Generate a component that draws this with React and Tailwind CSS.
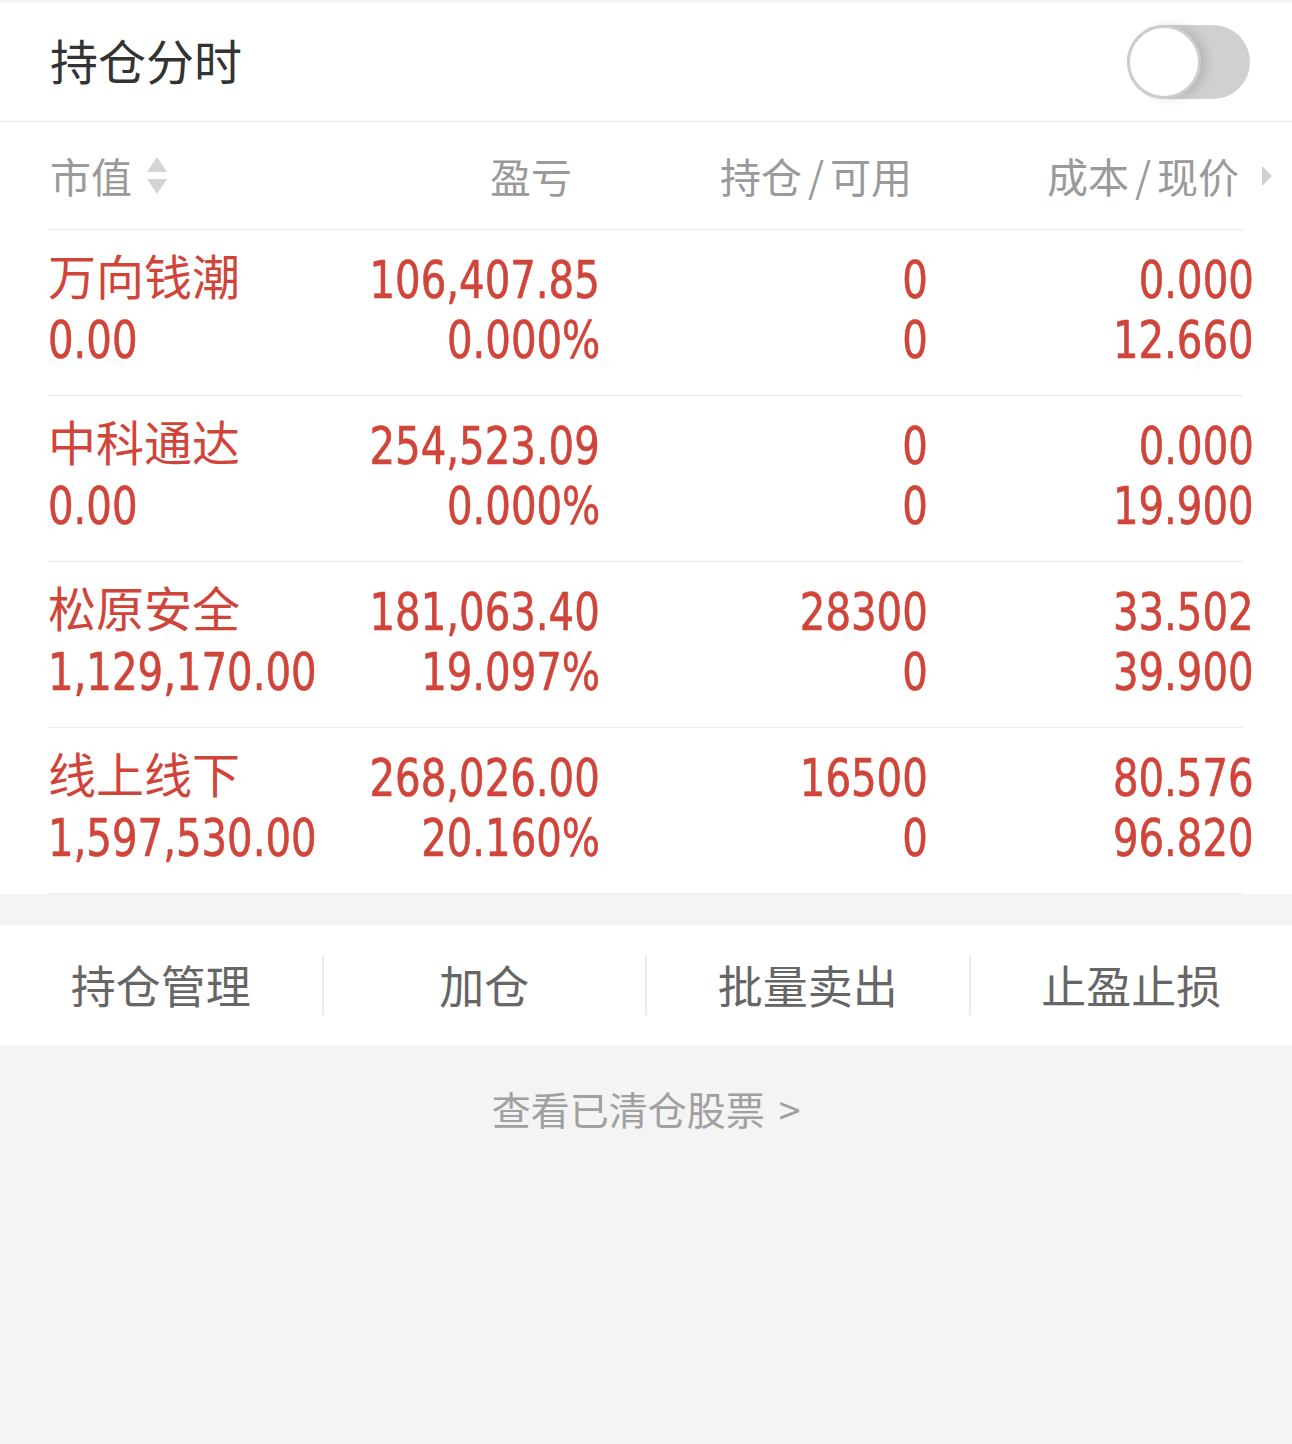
import React from "react";

// dati delle posizioni
const rows = [
  { name: "万向钱潮", value: "0.00", pl: "106,407.85", plPct: "0.000%", hold: "0", avail: "0", cost: "0.000", price: "12.660" },
  { name: "中科通达", value: "0.00", pl: "254,523.09", plPct: "0.000%", hold: "0", avail: "0", cost: "0.000", price: "19.900" },
  { name: "松原安全", value: "1,129,170.00", pl: "181,063.40", plPct: "19.097%", hold: "28300", avail: "0", cost: "33.502", price: "39.900" },
  { name: "线上线下", value: "1,597,530.00", pl: "268,026.00", plPct: "20.160%", hold: "16500", avail: "0", cost: "80.576", price: "96.820" },
];

const cjk = "font-['Noto_Sans_CJK_SC',sans-serif]";
const num = "font-['DejaVu_Sans_Condensed','Liberation_Sans_Narrow',Roboto,sans-serif]";

// numero stretto, stile DIN
function Num({ children, right }) {
  return (
    <div className="h-[60px] leading-[60px]">
      <span
        className={`inline-block ${num} text-[52px] leading-[60px] scale-x-[0.86] [-webkit-text-stroke:0.6px_#d0453a] ${
          right ? "origin-right" : "origin-left"
        }`}
      >
        {children}
      </span>
    </div>
  );
}

function SortIcon() {
  return (
    <svg width="22" height="40" viewBox="0 0 22 40" className="ml-[14px]">
      <path d="M11 1 L21 16 L1 16 Z" fill="#d4d4d4" />
      <path d="M1 23 L21 23 L11 38 Z" fill="#d4d4d4" />
    </svg>
  );
}

function Toggle() {
  return (
    <div className="relative w-[123px] h-[74px] rounded-full bg-[#d0d0d0]">
      <div className="absolute left-0 top-0 w-[74px] h-[74px] rounded-full bg-white border-[3px] border-[#cdcdcd] shadow-[6px_0_10px_rgba(0,0,0,0.12)]" />
    </div>
  );
}

export default function App() {
  return (
    <div className={`w-[1292px] min-h-[1444px] bg-[#f4f4f4] pt-[3px] ${cjk}`}>
      {/* intestazione */}
      <div className="bg-white">
        <div className="h-[119px] pl-[50px] pr-[42px] flex items-center justify-between border-b border-[#ececec]">
          <span className="text-[48px] text-[#333] leading-none -mt-[6px]">持仓分时</span>
          <Toggle />
        </div>

        {/* colonne */}
        <div className="ml-12 mr-[49px] h-[108px] flex items-center border-b border-[#ececec] text-[41px] text-[#9a9a9a]">
          <div className="w-[272px] shrink-0 flex items-center pl-[2px]">
            <span>市值</span>
            <SortIcon />
          </div>
          <div className="w-[280px] shrink-0 text-right pr-[28px]">盈亏</div>
          <div className="w-[328px] shrink-0 text-right pr-[16px]">
            持仓<span className="mx-[6px]">/</span>可用
          </div>
          <div className="w-[345px] shrink-0 flex items-center justify-end">
            <span>
              成本<span className="mx-[6px]">/</span>现价
            </span>
            <svg width="12" height="22" viewBox="0 0 12 22" className="ml-[22px]">
              <path d="M1 1 L11 11 L1 21 Z" fill="#cfcfcf" />
            </svg>
          </div>
        </div>

        {/* righe */}
        {rows.map((r) => (
          <div key={r.name} className="ml-12 mr-[49px] h-[166px] pt-[20px] flex border-b border-[#ececec] text-[#d0453a]">
            <div className="w-[272px] shrink-0">
              <div className="text-[48px] h-[60px] leading-[48px]">{r.name}</div>
              <Num>{r.value}</Num>
            </div>
            <div className="w-[280px] shrink-0 text-right">
              <Num right>{r.pl}</Num>
              <Num right>{r.plPct}</Num>
            </div>
            <div className="w-[328px] shrink-0 text-right">
              <Num right>{r.hold}</Num>
              <Num right>{r.avail}</Num>
            </div>
            <div className="w-[326px] shrink-0 text-right">
              <Num right>{r.cost}</Num>
              <Num right>{r.price}</Num>
            </div>
          </div>
        ))}
      </div>

      {/* azioni */}
      <div className="mt-[31px] bg-white h-[120px] flex items-center text-[45px] text-[#666]">
        <div className="flex-1 text-center">持仓管理</div>
        <div className="w-[2px] h-[60px] bg-[#ebebeb]" />
        <div className="flex-1 text-center">加仓</div>
        <div className="w-[2px] h-[60px] bg-[#ebebeb]" />
        <div className="flex-1 text-center">批量卖出</div>
        <div className="w-[2px] h-[60px] bg-[#ebebeb]" />
        <div className="flex-1 text-center">止盈止损</div>
      </div>

      <div className="pt-[38px] text-center text-[39px] leading-[50px] text-[#a0a0a0]">
        查看已清仓股票<span className="ml-[14px]">&gt;</span>
      </div>
    </div>
  );
}
